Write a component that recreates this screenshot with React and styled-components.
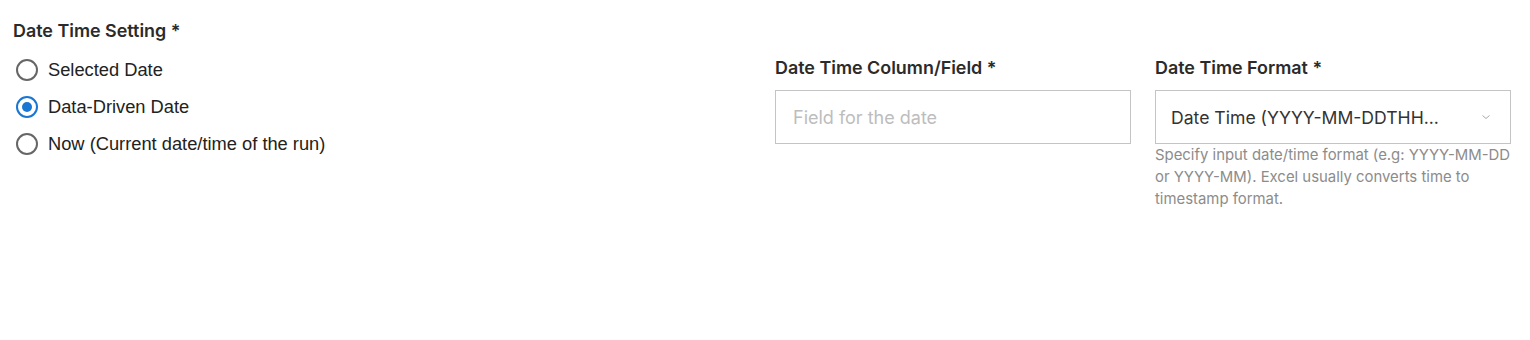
import React, { useState } from "react";
import styled, { createGlobalStyle } from "styled-components";

const GlobalStyle = createGlobalStyle`
  body {
    margin: 0;
    background: #ffffff;
    font-family: Inter, "Liberation Sans", sans-serif;
  }
`;

const options = [
  { id: "selected", label: "Selected Date" },
  { id: "data", label: "Data-Driven Date" },
  { id: "now", label: "Now (Current date/time of the run)" },
];

const App = () => {
  const [choice, setChoice] = useState("data");

  return (
    <Wrapper>
      <GlobalStyle />
      <div className="setting">
        <Label>Date Time Setting *</Label>
        <RadioList>
          {options.map((o) => (
            <RadioRow key={o.id} onClick={() => setChoice(o.id)}>
              <Circle checked={choice === o.id} />
              <span>{o.label}</span>
            </RadioRow>
          ))}
        </RadioList>
      </div>

      <Field>
        <Label>Date Time Column/Field *</Label>
        <Input placeholder="Field for the date" />
      </Field>

      <Field>
        <Label>Date Time Format *</Label>
        <Select>
          <span>Date Time (YYYY-MM-DDTHH...</span>
          <svg width="10" height="6" viewBox="0 0 10 6">
            <path d="M1.5 1.5l3.5 3 3.5-3" fill="none" stroke="#a9a9a9" strokeWidth="1" />
          </svg>
        </Select>
        <Help>
          Specify input date/time format (e.g: YYYY-MM-DD or YYYY-MM). Excel
          usually converts time to timestamp format.
        </Help>
      </Field>
    </Wrapper>
  );
};

export default App;

const Wrapper = styled.div`
  display: grid;
  grid-template-columns: 1fr 356px 356px;
  column-gap: 24px;
  padding: 19px 19px 0 13px;
  align-items: start;
`;

const Label = styled.div`
  font-family: Inter, "Liberation Sans", sans-serif;
  font-size: 17.9px;
  font-weight: 600;
  line-height: 24px;
  color: #2b2b2b;
`;

const RadioList = styled.div`
  display: flex;
  flex-direction: column;
  margin-top: 8px;
`;

const RadioRow = styled.label`
  display: flex;
  align-items: center;
  height: 37px;
  gap: 10px;
  padding-left: 3px;
  font-family: "Liberation Sans", Arial, sans-serif;
  font-size: 18.3px;
  color: #222222;
  cursor: pointer;
`;

const Circle = styled.span`
  box-sizing: border-box;
  width: 22px;
  height: 22px;
  border-radius: 50%;
  border: 2px solid ${(p) => (p.checked ? "#1976d2" : "#666666")};
  display: flex;
  align-items: center;
  justify-content: center;

  &::after {
    content: "";
    width: 10px;
    height: 10px;
    border-radius: 50%;
    background: #1976d2;
    display: ${(p) => (p.checked ? "block" : "none")};
  }
`;

const Field = styled.div`
  display: flex;
  flex-direction: column;
  padding-top: 37px;

  ${Label} {
    margin-bottom: 10px;
  }
`;

const Input = styled.input`
  box-sizing: border-box;
  height: 54px;
  width: 100%;
  border: 1px solid #c4c4c4;
  border-radius: 0;
  padding: 0 17px;
  font-family: Inter, "Liberation Sans", sans-serif;
  font-size: 18px;
  color: #333333;
  outline: none;

  &::placeholder {
    color: #bdbdbd;
  }
`;

const Select = styled.div`
  box-sizing: border-box;
  height: 54px;
  border: 1px solid #c4c4c4;
  display: flex;
  align-items: center;
  justify-content: space-between;
  padding: 0 19px 0 15px;
  font-size: 17.6px;
  color: #333333;
`;

const Help = styled.div`
  font-size: 14.9px;
  line-height: 22px;
  color: #8c8c8c;
`;
